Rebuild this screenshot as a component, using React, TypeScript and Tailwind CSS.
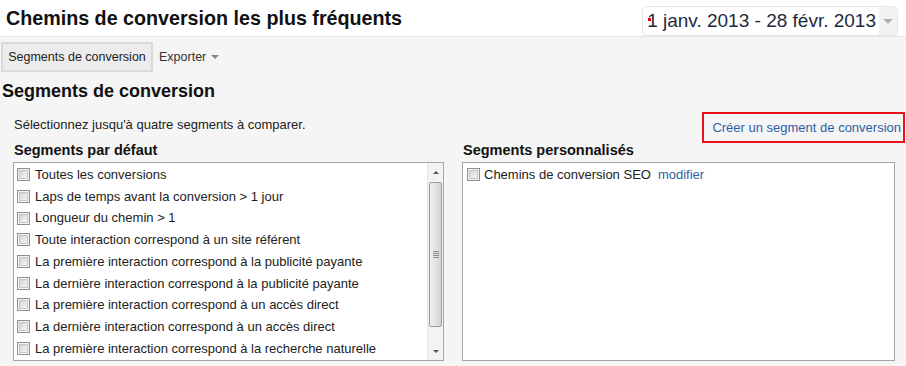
import React from 'react'

const defaults = [
  'Toutes les conversions',
  'Laps de temps avant la conversion > 1 jour',
  'Longueur du chemin > 1',
  'Toute interaction correspond à un site référent',
  'La première interaction correspond à la publicité payante',
  'La dernière interaction correspond à la publicité payante',
  'La première interaction correspond à un accès direct',
  'La dernière interaction correspond à un accès direct',
  'La première interaction correspond à la recherche naturelle',
]

function Checkbox() {
  return (
    <span className="block w-[13px] h-[13px] shrink-0 border border-[#8e8f8f] bg-[#f4f4f4] p-[1px]">
      <span className="block w-full h-full border border-[#c4c6c9] bg-gradient-to-br from-[#d2d4d7] to-[#f7f7f7]" />
    </span>
  )
}

function Caret() {
  return <span className="inline-block w-0 h-0 border-l-[4px] border-r-[4px] border-t-[4px] border-l-transparent border-r-transparent border-t-[#888]" />
}

function Scrollbar() {
  return (
    <div className="w-[16px] shrink-0 flex flex-col border-l border-[#e3e3e3] bg-[#f3f3f3]">
      <div className="h-[18px] flex items-center justify-center">
        <span className="inline-block w-0 h-0 border-l-[3px] border-r-[3px] border-b-[3px] border-l-transparent border-r-transparent border-b-[#555]" />
      </div>
      <div className="mx-[1px] mt-[1px] h-[145px] rounded-[2px] border border-[#9c9c9c] bg-gradient-to-r from-[#efefef] via-[#e3e3e3] to-[#d4d4d4] flex flex-col items-center justify-center gap-[1px]">
        <span className="block w-[6px] h-px bg-[#8a8a8a]" />
        <span className="block w-[6px] h-px bg-[#8a8a8a]" />
        <span className="block w-[6px] h-px bg-[#8a8a8a]" />
        <span className="block w-[6px] h-px bg-[#8a8a8a]" />
      </div>
      <div className="flex-1" />
      <div className="h-[18px] flex items-center justify-center">
        <span className="inline-block w-0 h-0 border-l-[3px] border-r-[3px] border-t-[3px] border-l-transparent border-r-transparent border-t-[#555]" />
      </div>
    </div>
  )
}

export default function App() {
  return (
    <div className="w-[906px] h-[366px] overflow-hidden bg-[#f5f5f5] text-[#222] font-['Liberation_Sans',Arial,sans-serif]">
      {/* Header */}
      <div className="h-[37px] bg-white border-b border-[#e6e6e6] flex items-start justify-between">
        <h1 className="pl-[6px] pt-[6px] text-[19.7px] leading-[24px] font-bold text-[#111]">
          Chemins de conversion les plus fréquents
        </h1>
        <div className="mt-[6px] mr-[8px] h-[30px] flex border border-[#e6e6e6] rounded-[4px] bg-white overflow-hidden">
          <div className="relative pl-[4px] pr-[3px] text-[19px] leading-[28px] text-[#1e2a3c]">
            <span className="absolute left-[5px] top-[11px] w-[3px] h-[3px] bg-[#e00]" />
            1 janv. 2013 - 28 févr. 2013
          </div>
          <div className="w-[18px] bg-[#f2f2f2] flex items-center justify-center">
            <span className="inline-block w-0 h-0 border-l-[5px] border-r-[5px] border-t-[5px] border-l-transparent border-r-transparent border-t-[#b3b3b3]" />
          </div>
        </div>
      </div>

      {/* Toolbar */}
      <div className="flex items-center pt-[5px] h-[35px]">
        <button className="ml-[1px] w-[152px] h-[30px] border-2 border-[#d9d9d9] bg-[#ececec] text-[12.5px] text-[#222]">
          Segments de conversion
        </button>
        <button className="ml-[6px] flex items-center gap-[5px] text-[12.5px] text-[#333]">
          Exporter <Caret />
        </button>
      </div>

      <h2 className="mt-[8px] pl-[2px] text-[18px] leading-[22px] font-bold text-[#111]">Segments de conversion</h2>

      <div className="mt-[10px] h-[29px] flex items-start justify-between">
        <p className="pl-[14px] pt-[5px] text-[13px] leading-[16px]">Sélectionnez jusqu'à quatre segments à comparer.</p>
        <a className="mr-[1px] h-[31px] border-2 border-[#e8141b] pl-[8px] pr-[2px] pt-[1px] text-[13px] leading-[26px] text-[#2d5fa6]">
          Créer un segment de conversion
        </a>
      </div>

      <div className="flex pl-[13px] gap-[18px]">
        <div className="w-[431px]">
          <h3 className="pl-[1px] h-[21px] text-[14.5px] leading-[18px] font-bold text-[#111]">Segments par défaut</h3>
          <div className="h-[199px] flex border border-[#a6a6a6] bg-white">
            <ul className="flex-1 pt-[1px]">
              {defaults.map(label => (
                <li key={label} className="h-[21.7px] flex items-center pl-[3px] text-[13px]">
                  <Checkbox />
                  <span className="ml-[5px]">{label}</span>
                </li>
              ))}
            </ul>
            <Scrollbar />
          </div>
        </div>
        <div className="w-[433px]">
          <h3 className="pl-[1px] h-[21px] text-[14.5px] leading-[18px] font-bold text-[#111]">Segments personnalisés</h3>
          <div className="h-[199px] border border-[#a6a6a6] bg-white pt-[1px]">
            <div className="h-[21.7px] flex items-center pl-[4px] text-[13px]">
              <Checkbox />
              <span className="ml-[4px]">Chemins de conversion SEO</span>
              <a className="ml-[7px] text-[#2d5fa6]">modifier</a>
            </div>
          </div>
        </div>
      </div>
    </div>
  )
}
